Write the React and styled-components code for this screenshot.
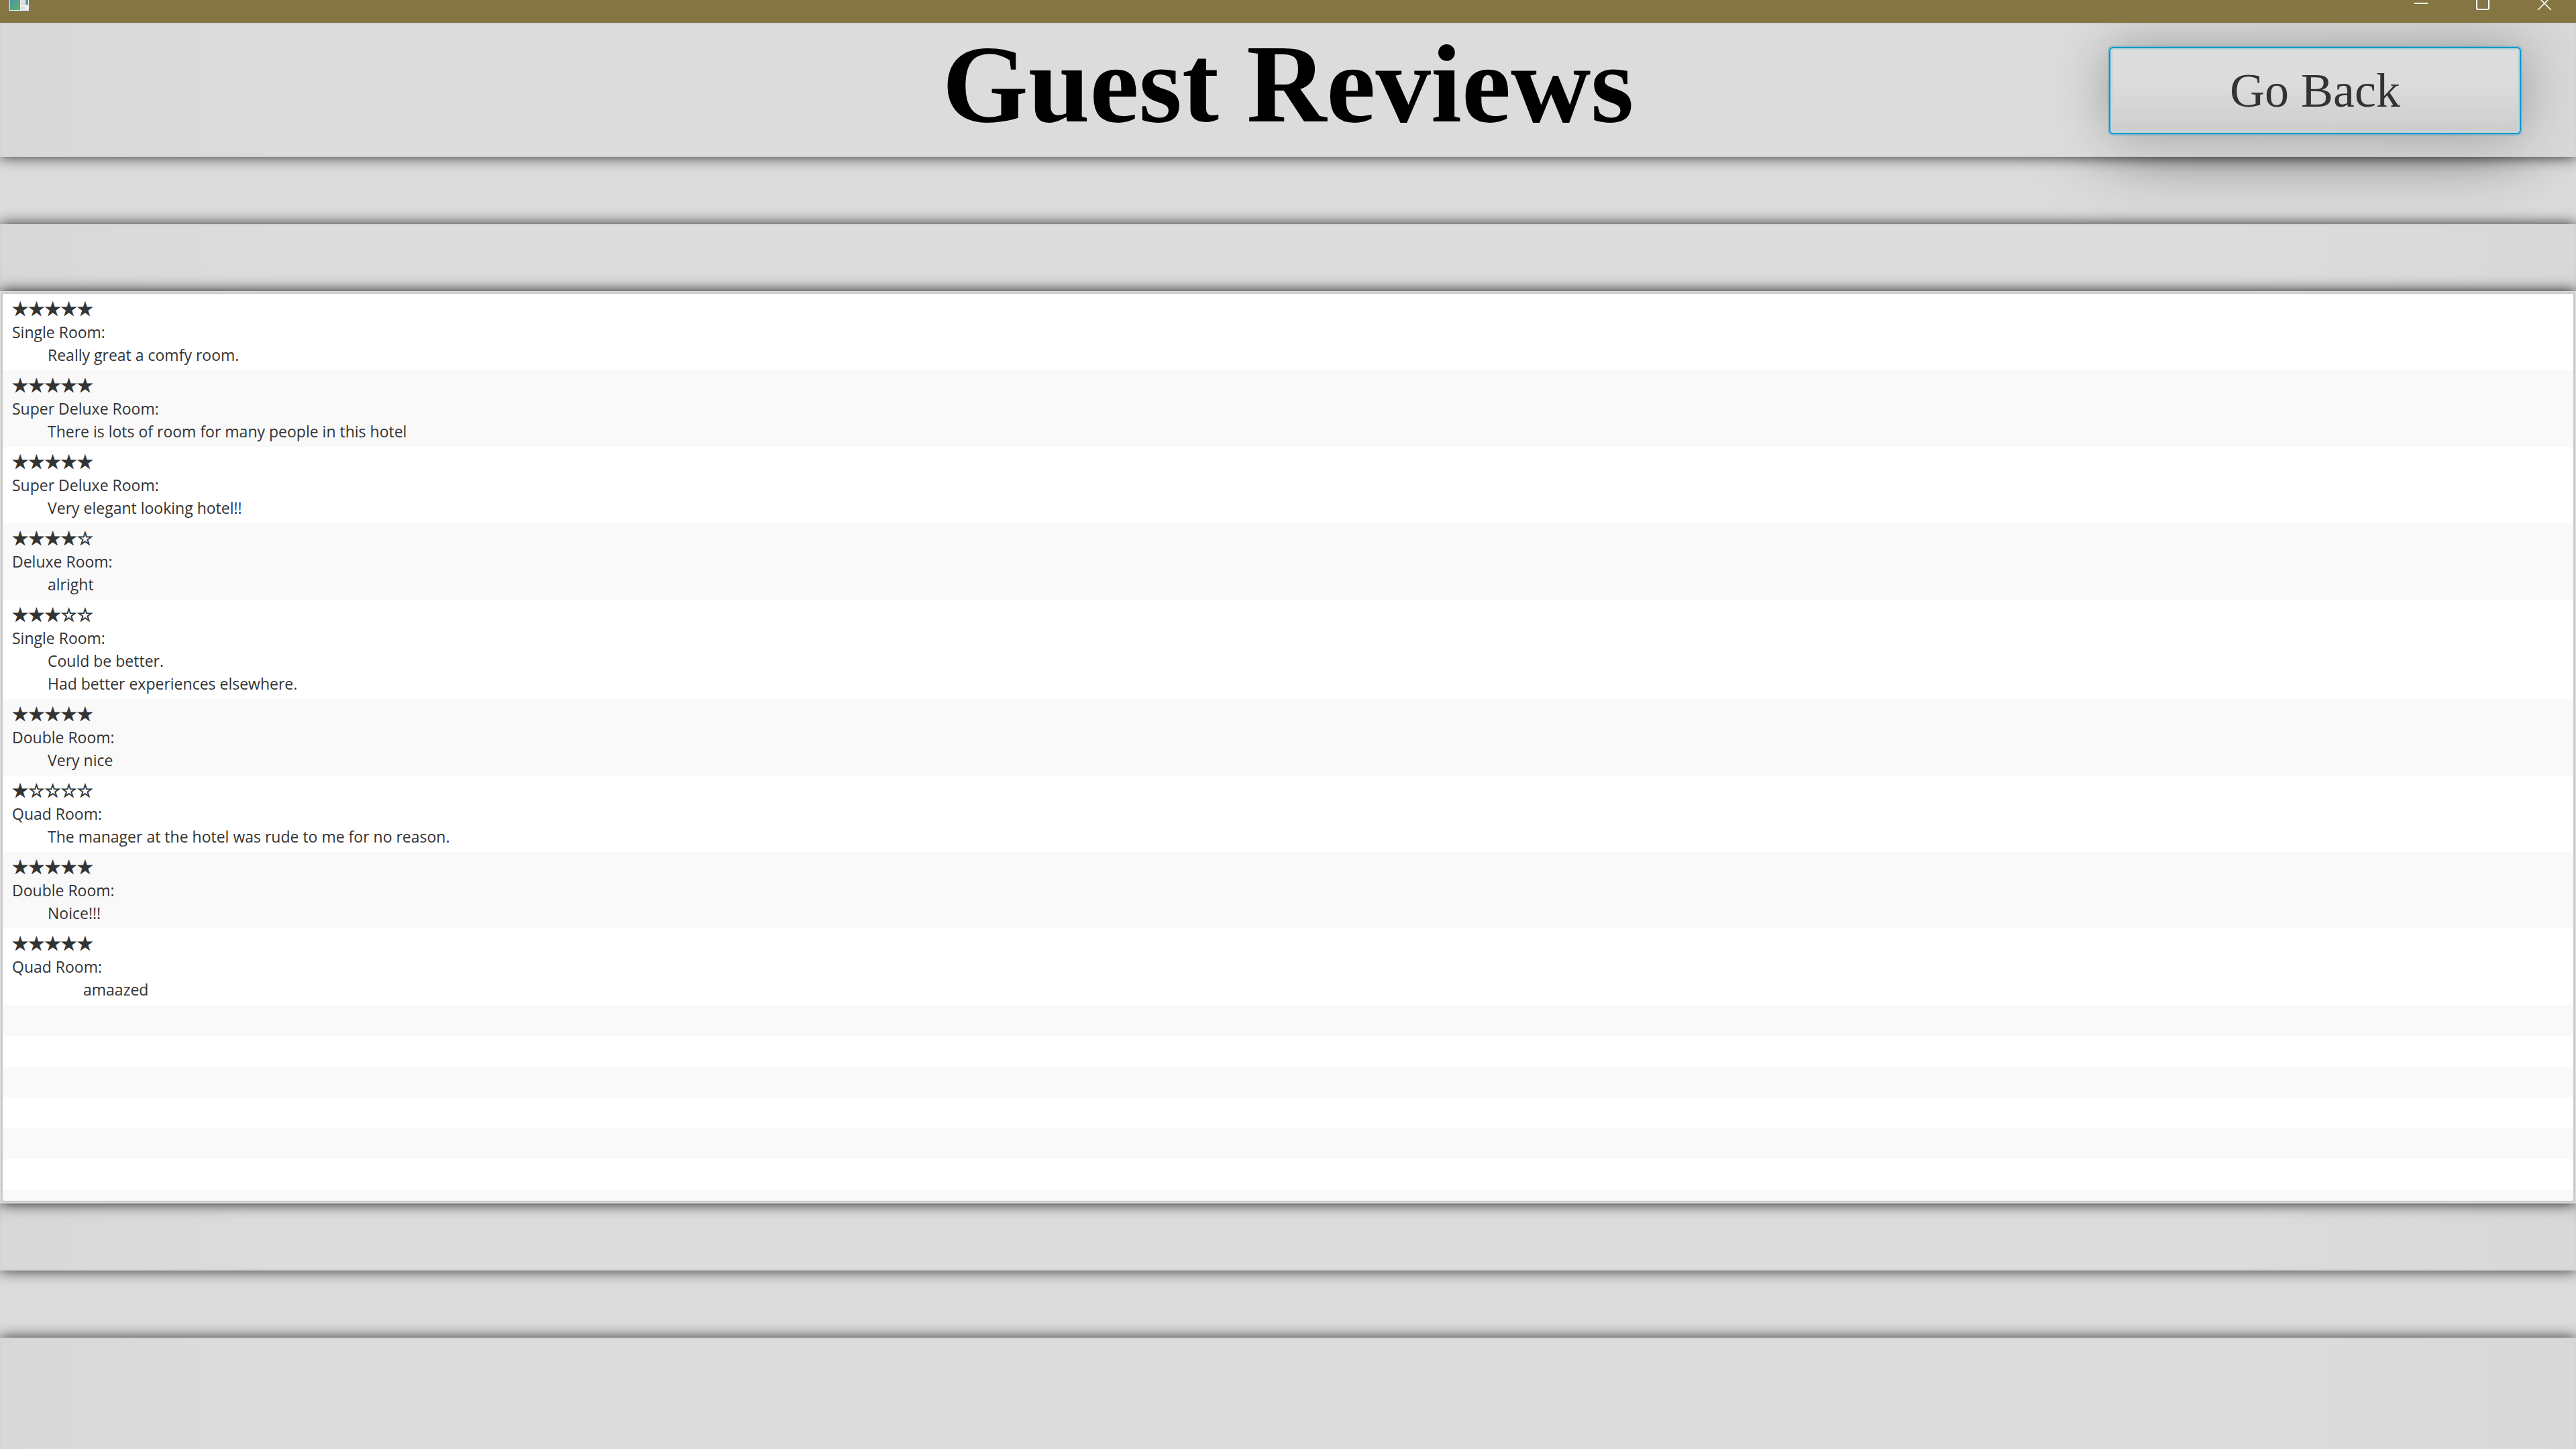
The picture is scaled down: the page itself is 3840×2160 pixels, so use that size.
import React from "react";
import styled, { createGlobalStyle } from "styled-components";

const GlobalStyle = createGlobalStyle`
  *, *::before, *::after { box-sizing: border-box; }
  html, body, #root { height: 100%; }
  body {
    margin: 0;
    overflow: hidden;
    background: #dcdcdc;
    color: #333333;
    font-family: "Open Sans", "Noto Sans", sans-serif;
    font-size: 23px;
    line-height: 34px;
  }
`;

const Window = styled.div`
  display: flex;
  flex-direction: column;
  height: 100%;
`;

const TitleBar = styled.div`
  position: relative;
  z-index: 4;
  flex: none;
  display: flex;
  align-items: flex-start;
  justify-content: space-between;
  height: 34px;
  padding: 0 33px 0 12px;
  background: #847543;
`;

const Controls = styled.div`
  display: flex;
  gap: 64px;
`;

const ControlButton = styled.button`
  display: block;
  width: 28px;
  height: 20px;
  padding: 0;
  border: 0;
  background: none;
  color: #ffffff;
`;

const HeaderArea = styled.div`
  position: relative;
  z-index: 1;
  flex: none;

  &::before {
    content: "";
    position: absolute;
    z-index: -1;
    top: 36px;
    right: 82px;
    width: 614px;
    height: 130px;
    box-shadow: 0 0 120px rgba(0, 0, 0, 0.75);
  }
`;

const Panel = styled.div`
  position: relative;
  z-index: 2;
  flex: none;
  height: ${(p) => p.$height || 100}px;
  border: 2px solid #d3d3d3;
  border-bottom-width: ${(p) => (p.$last ? 0 : 2)}px;
  background: linear-gradient(
    90deg,
    #d8d8d8 0,
    #dcdcdc 400px,
    #dcdcdc calc(100% - 500px),
    #d8d8d8 100%
  );
  box-shadow: 0 0 20px rgba(0, 0, 0, 0.8);
`;

const Header = styled(Panel).attrs({ as: "header" })`
  display: grid;
  grid-template-columns: 1fr auto 1fr;
  align-items: center;
  padding: 2px 80px 0;
`;

const Title = styled.h1`
  grid-column: 2;
  align-self: start;
  margin: 0;
  color: #000000;
  font: bold 165px/176px "Liberation Serif", serif;
`;

const BackButton = styled.button`
  justify-self: end;
  width: 614px;
  height: 130px;
  padding: 0;
  border: 2px solid #0096c9;
  border-radius: 6px;
  background: linear-gradient(#dddddd 0, #dcdcdc 42%, #cdcdcd 100%);
  box-shadow:
    inset 0 0 0 2px #c6d9dc,
    inset 0 0 0 3px #bcd4d9,
    0 0 0 2px rgba(0, 150, 201, 0.3),
    0 0 80px rgba(0, 0, 0, 0.3);
  color: #333333;
  font: 72px/84px "Liberation Serif", serif;
`;

const Gap = styled.div`
  flex: none;
  height: 100px;
`;

const ListFrame = styled.main`
  position: relative;
  z-index: 3;
  flex: 1 1 0;
  min-height: 0;
  padding: 2px;
  background: #dcdcdc;
  box-shadow: 0 0 20px rgba(0, 0, 0, 0.9);
`;

const ReviewList = styled.ul`
  height: 100%;
  margin: 0;
  padding: 0;
  border: 2px solid #c8c8c8;
  overflow: hidden;
  list-style: none;
  background: #ffffff;
`;

const Row = styled.li`
  min-height: 46px;
  padding: 6px 14px;
  background: #ffffff;

  &:nth-child(even) {
    background: #f9f9f9;
  }
`;

const Stars = styled.div`
  height: 34px;
  font: 27px/34px "DejaVu Sans", sans-serif;
  -webkit-text-stroke: 1px #333333;
`;

const Comment = styled.p`
  margin: 0;
  tab-size: 53px;
  white-space: pre;
`;

const reviews = [
  { stars: 5, room: "Single Room:", text: "\tReally great a comfy room." },
  { stars: 5, room: "Super Deluxe Room:", text: "\tThere is lots of room for many people in this hotel" },
  { stars: 5, room: "Super Deluxe Room:", text: "\tVery elegant looking hotel!!" },
  { stars: 4, room: "Deluxe Room:", text: "\talright" },
  { stars: 3, room: "Single Room:", text: "\tCould be better.\n\tHad better experiences elsewhere." },
  { stars: 5, room: "Double Room:", text: "\tVery nice" },
  { stars: 1, room: "Quad Room:", text: "\tThe manager at the hotel was rude to me for no reason." },
  { stars: 5, room: "Double Room:", text: "\tNoice!!!" },
  { stars: 5, room: "Quad Room:", text: "\t\tamaazed" },
];

const EMPTY_ROWS = 7;

function AppIcon() {
  return (
    <svg width="34" height="18" viewBox="0 0 34 18" aria-hidden="true">
      <defs>
        <linearGradient id="pane" x1="0" y1="0" x2="1" y2="1">
          <stop offset="0" stopColor="#4a8fae" />
          <stop offset="1" stopColor="#62b36a" />
        </linearGradient>
      </defs>
      <rect x="1" y="-4" width="32" height="21" fill="#777b80" />
      <rect x="2" y="-4" width="29" height="20" fill="#eceef0" />
      <rect x="3" y="-4" width="15" height="19" fill="url(#pane)" />
      <path d="M19 1h6M19 4h6M19 6h6M19 11h6M19 13h6" stroke="#c6c6c6" />
      <rect x="26" y="-4" width="4" height="11" fill="#4fa388" />
    </svg>
  );
}

export default function App() {
  return (
    <>
      <GlobalStyle />
      <Window>
        <TitleBar>
          <AppIcon />
          <Controls>
            <ControlButton aria-label="Minimize">
              <svg width="28" height="20" fill="none" stroke="currentColor" strokeWidth="2">
                <path d="M4 5h20" />
              </svg>
            </ControlButton>
            <ControlButton aria-label="Maximize">
              <svg width="28" height="20" fill="none" stroke="currentColor" strokeWidth="2">
                <rect x="5" y="-5" width="18" height="19" rx="2" />
              </svg>
            </ControlButton>
            <ControlButton aria-label="Close">
              <svg width="28" height="20" fill="none" stroke="currentColor" strokeWidth="1.6">
                <path d="M4 15L24 -5M24 15L4 -5" />
              </svg>
            </ControlButton>
          </Controls>
        </TitleBar>
        <HeaderArea>
          <Header $height={200}>
            <Title>Guest Reviews</Title>
            <BackButton>Go Back</BackButton>
          </Header>
        </HeaderArea>
        <Gap />
        <Panel />
        <ListFrame>
          <ReviewList>
            {reviews.map((r, i) => (
              <Row key={i}>
                <Stars>{"★".repeat(r.stars) + "☆".repeat(5 - r.stars)}</Stars>
                <div>{r.room}</div>
                <Comment>{r.text}</Comment>
              </Row>
            ))}
            {Array.from({ length: EMPTY_ROWS }, (_, i) => (
              <Row key={`empty-${i}`} aria-hidden="true" />
            ))}
          </ReviewList>
        </ListFrame>
        <Panel />
        <Gap />
        <Panel $height={166} $last />
      </Window>
    </>
  );
}
